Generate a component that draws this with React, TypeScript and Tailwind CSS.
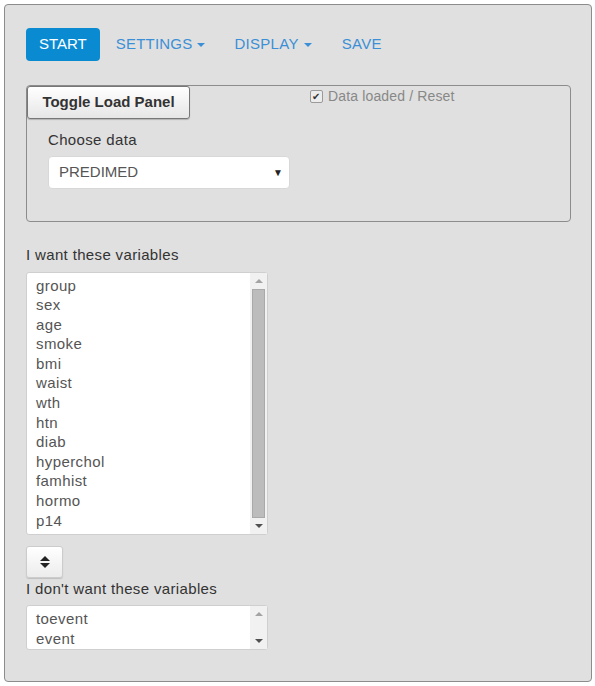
const wanted = [
  'group', 'sex', 'age', 'smoke', 'bmi', 'waist', 'wth', 'htn', 'diab', 'hyperchol', 'famhist', 'hormo', 'p14',
];
const unwanted = ['toevent', 'event'];

function Caret() {
  return <span className="ml-[5px] inline-block align-middle border-x-[4px] border-t-[4px] border-x-transparent border-t-current" />;
}

function ListBox({ items, height, thumb }: { items: string[]; height: string; thumb: boolean }) {
  return (
    <div className={`flex w-[242px] ${height} rounded-[3px] border border-[#cfcfcf] bg-white`}>
      <div className="flex-1 pl-[9px] pt-[3px] text-[15px] leading-[19.6px] tracking-[0.4px] text-[#555]">
        {items.map((v) => (
          <div key={v}>{v}</div>
        ))}
      </div>
      <div className="flex w-[17px] flex-col items-center bg-[#f1f1f1]">
        <span className="mt-[6px] border-x-[4px] border-b-[4px] border-x-transparent border-b-[#a3a3a3]" />
        <div className="my-[6px] w-[13px] flex-1">
          {thumb && <div className="h-full bg-[#bcbcbc] border border-[#a9a9a9]" />}
        </div>
        <span className="mb-[6px] border-x-[4px] border-t-[4px] border-x-transparent border-t-[#505050]" />
      </div>
    </div>
  );
}

export default function App() {
  return (
    <div className="h-[686px] w-[595px] bg-white p-[4px] pr-[3px] font-['Liberation_Sans',Arial,sans-serif]">
      <div className="h-[678px] rounded-[4px] border border-[#8c8c8c] bg-[#e0e0e0] px-[21px] pt-[23px]">
        <div className="flex items-center text-[15px]">
          <button className="h-[33px] rounded-[4px] bg-[#0a8bd1] px-[13px] text-white">START</button>
          <span className="ml-[16px] tracking-[0.2px] text-[#3b8fd6]">SETTINGS<Caret /></span>
          <span className="ml-[29px] tracking-[0.3px] text-[#3b8fd6]">DISPLAY<Caret /></span>
          <span className="ml-[30px] tracking-[0.3px] text-[#3b8fd6]">SAVE</span>
        </div>

        <div className="mt-[24px] h-[137px] w-[545px] rounded-[4px] border border-[#8c8c8c]">
          <div className="flex items-start">
            <button className="h-[33px] w-[163px] rounded-[3px] border border-[#777] bg-gradient-to-b from-white to-[#e6e6e6] text-[15px] font-bold text-[#333] shadow-[0_1px_1px_rgba(0,0,0,0.2)]">
              Toggle Load Panel
            </button>
            <label className="ml-[120px] mt-0 flex items-center text-[14px] tracking-[0.15px] text-[#888]">
              <span className="mr-[5px] flex h-[13px] w-[13px] items-center justify-center rounded-[2px] border border-[#9a9a9a] bg-[#ececec] text-[10px] leading-none text-[#333]">
                ✔
              </span>
              Data loaded / Reset
            </label>
          </div>
          <div className="pl-[21px]">
            <div className="mt-[10px] text-[15px] tracking-[0.35px] text-[#333]">Choose data</div>
            <div className="mt-[4px] flex h-[33px] w-[242px] items-center justify-between rounded-[4px] border border-[#d8d8d8] bg-white pl-[10px] pr-[6px] text-[15px] text-[#555]">
              <span>PREDIMED</span>
              <span className="text-[10px] text-[#222]">▼</span>
            </div>
          </div>
        </div>

        <div className="mt-[22px] text-[15px] tracking-[0.35px] text-[#333]">I want these variables</div>
        <div className="mt-[5px]">
          <ListBox items={wanted} height="h-[263px]" thumb />
        </div>

        <button className="mt-[11px] flex h-[32px] w-[37px] items-center justify-center rounded-[3px] border border-[#ccc] bg-gradient-to-b from-white to-[#ececec] shadow-[0_1px_1px_rgba(0,0,0,0.15)]">
          <span className="flex flex-col items-center gap-[2px]">
            <span className="border-x-[5px] border-b-[5px] border-x-transparent border-b-[#222]" />
            <span className="border-x-[5px] border-t-[5px] border-x-transparent border-t-[#222]" />
          </span>
        </button>
        <div className="text-[15px] tracking-[0.35px] text-[#333]">I don't want these variables</div>
        <div className="mt-[5px]">
          <ListBox items={unwanted} height="h-[45px]" thumb={false} />
        </div>
      </div>
    </div>
  );
}
